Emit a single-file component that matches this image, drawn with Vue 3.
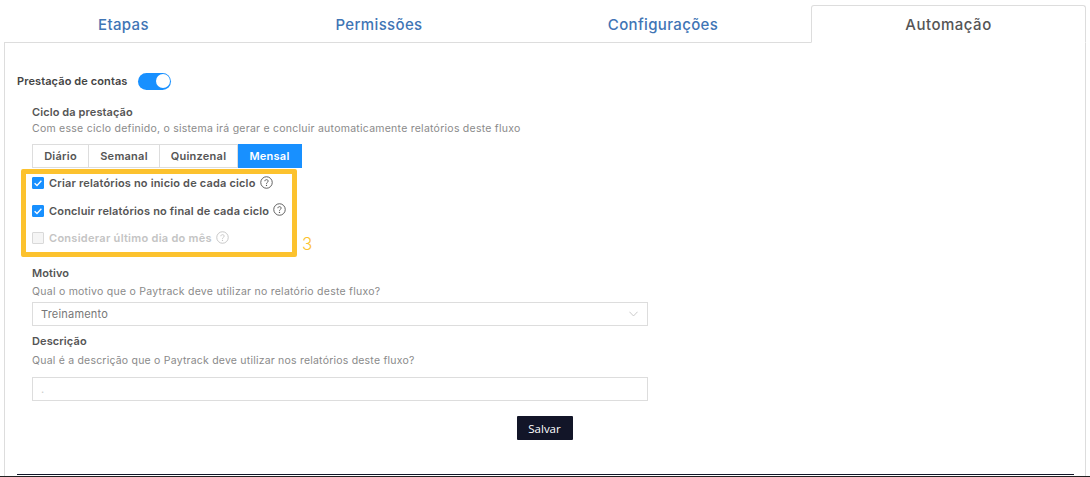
<template>
  <div class="page">
    <div class="tabs">
      <div
        v-for="tab in tabs"
        :key="tab.label"
        class="tab"
        :class="{ active: tab.active }"
        :style="{ width: tab.width + 'px' }"
      >{{ tab.label }}</div>
    </div>

    <div class="panel">
      <div class="head-row">
        <span class="head-label">Prestação de contas</span>
        <span class="switch"><span class="knob"></span></span>
      </div>

      <div class="form">
        <div class="title">Ciclo da prestação</div>
        <div class="hint">Com esse ciclo definido, o sistema irá gerar e concluir automaticamente relatórios deste fluxo</div>

        <div class="segments">
          <span
            v-for="s in cycles"
            :key="s.label"
            class="segment"
            :class="{ on: s.label === selected }"
            :style="{ width: s.width + 'px' }"
          >{{ s.label }}</span>
        </div>

        <div class="checks">
          <div v-for="c in checks" :key="c.label" class="check" :class="{ disabled: c.disabled }">
            <span class="box" :class="{ checked: c.checked }">
              <svg v-if="c.checked" viewBox="0 0 12 12" width="12" height="12">
                <path d="M2.6 6.2 L5 8.5 L9.4 3.8" fill="none" stroke="#fff" stroke-width="1.3" />
              </svg>
            </span>
            <span class="check-label">{{ c.label }}</span>
            <svg class="help" viewBox="0 0 14 14" width="13" height="13">
              <circle cx="7" cy="7" r="6.2" fill="none" stroke="currentColor" stroke-width="1" />
              <path d="M5.2 5.6 C5.2 3.4 8.8 3.4 8.8 5.5 C8.8 6.9 7 6.8 7 8.4" fill="none" stroke="currentColor" stroke-width="1" />
              <circle cx="7" cy="10.2" r="0.7" fill="currentColor" />
            </svg>
          </div>
          <span class="mark">3</span>
        </div>

        <div class="title motivo">Motivo</div>
        <div class="hint sub">Qual o motivo que o Paytrack deve utilizar no relatório deste fluxo?</div>
        <div class="field select">
          <span>Treinamento</span>
          <svg viewBox="0 0 10 6" width="9" height="6">
            <path d="M0.5 0.5 L5 5.2 L9.5 0.5" fill="none" stroke="#c4c4c4" stroke-width="1" />
          </svg>
        </div>

        <div class="title descricao">Descrição</div>
        <div class="hint sub2">Qual é a descrição que o Paytrack deve utilizar nos relatórios deste fluxo?</div>
        <div class="field text"><span class="dot">.</span></div>
      </div>

      <div class="actions">
        <button class="save">Salvar</button>
      </div>

      <div class="rule"></div>
    </div>
    <div class="bottom"></div>
  </div>
</template>

<script setup>
const tabs = [
  { label: 'Etapas', width: 239 },
  { label: 'Permissões', width: 272 },
  { label: 'Configurações', width: 296 },
  { label: 'Automação', width: 275, active: true },
]

const cycles = [
  { label: 'Diário', width: 57 },
  { label: 'Semanal', width: 71 },
  { label: 'Quinzenal', width: 78 },
  { label: 'Mensal', width: 64 },
]
const selected = 'Mensal'

const checks = [
  { label: 'Criar relatórios no inicio de cada ciclo', checked: true },
  { label: 'Concluir relatórios no final de cada ciclo', checked: true },
  { label: 'Considerar último dia do mês', disabled: true },
]
</script>

<style>
html, body {
  margin: 0;
  background: #fff;
  overflow: hidden;
}
</style>

<style scoped>
.page {
  width: 1090px;
  height: 477px;
  padding: 5px 0 0 4px;
  box-sizing: border-box;
  font-family: Inter, "Open Sans", sans-serif;
  color: #555;
  position: relative;
  overflow: hidden;
}

.tabs {
  display: flex;
  height: 38px;
  position: relative;
  z-index: 1;
}

.tab {
  box-sizing: border-box;
  padding-top: 10px;
  text-align: center;
  font-size: 15px;
  font-weight: 500;
  letter-spacing: 0.35px;
  color: #3f75b5;
  border-bottom: 1px solid #ddd;
}

.tab.active {
  padding-top: 9px;
  letter-spacing: 0.5px;
  color: #555;
  border: 1px solid #ddd;
  border-bottom: 1px solid #fff;
  border-radius: 3px 3px 0 0;
}

.panel {
  width: 1082px;
  height: 434px;
  box-sizing: border-box;
  border-left: 1px solid #ddd;
  border-right: 1px solid #ddd;
  padding: 29px 11px 0 12px;
}

.head-row {
  display: flex;
  align-items: center;
  gap: 10px;
  height: 18px;
}

.head-label {
  font-size: 11px;
  font-weight: 600;
  letter-spacing: 0.1px;
  color: #444;
}

.switch {
  display: flex;
  justify-content: flex-end;
  align-items: center;
  width: 33px;
  height: 17px;
  box-sizing: border-box;
  padding-right: 1px;
  border-radius: 9px;
  background: #1890ff;
}

.knob {
  width: 14px;
  height: 14px;
  border-radius: 50%;
  background: #fff;
}

.form {
  padding: 15px 0 0 15px;
  width: 616px;
}

.title {
  font-size: 11px;
  font-weight: 600;
  line-height: 14px;
  letter-spacing: 0.1px;
  color: #555;
}

.hint {
  font-size: 10.5px;
  line-height: 14px;
  margin-top: 3px;
  letter-spacing: 0.25px;
  color: #8a8a8a;
  white-space: nowrap;
}

.hint.sub {
  margin-top: 5px;
}

.hint.sub2 {
  margin-top: 6px;
  letter-spacing: 0.21px;
}

.segments {
  display: flex;
  margin-top: 8px;
  height: 24px;
}

.segment {
  box-sizing: border-box;
  display: flex;
  align-items: center;
  justify-content: center;
  font-size: 11px;
  font-weight: 600;
  letter-spacing: 0.25px;
  color: #555;
  border: 1px solid #ddd;
  border-left: 0;
}

.segment:first-child {
  border-left: 1px solid #ddd;
}

.segment.on {
  background: #1890ff;
  border-color: #1890ff;
  color: #fff;
}

.checks {
  position: relative;
  box-sizing: border-box;
  display: flex;
  flex-direction: column;
  gap: 9.5px;
  width: 276px;
  height: 88px;
  margin: 1px 0 0 -11px;
  padding: 0 0 0 6px;
  border: 5px solid #fcc22e;
  border-radius: 2px;
}

.check {
  display: flex;
  align-items: center;
  height: 18px;
  font-size: 11px;
  font-weight: 600;
  letter-spacing: 0.17px;
  white-space: nowrap;
  color: #555;
}

.check.disabled {
  letter-spacing: 0.28px;
  color: #c4c4c4;
}

.box {
  box-sizing: border-box;
  width: 12px;
  height: 12px;
  margin-right: 5px;
  border-radius: 1px;
  background: #f5f5f5;
  border: 1px solid #d9d9d9;
  display: flex;
  overflow: hidden;
}

.box svg {
  margin: -1px;
  flex: none;
}

.box.checked {
  background: #1890ff;
  border-color: #1890ff;
}

.help {
  margin: -2px 0 0 4px;
  color: #555;
}

.disabled .help {
  color: #c4c4c4;
}

.mark {
  position: absolute;
  left: 276px;
  top: 60px;
  font-size: 17px;
  font-weight: 300;
  color: #fcc22e;
}

.motivo {
  margin-top: 9px;
}

.field {
  box-sizing: border-box;
  height: 24px;
  border: 1px solid #ddd;
  display: flex;
  align-items: center;
  justify-content: space-between;
  padding: 0 9px 0 8px;
  font-size: 11px;
  letter-spacing: 0.2px;
  color: #777;
}

.select {
  margin-top: 3px;
}

.descricao {
  margin-top: 8px;
}

.text {
  margin-top: 9px;
}

.dot {
  color: #ccc;
}

.actions {
  display: flex;
  justify-content: center;
  padding: 15px 2px 0 0;
}

.save {
  width: 56px;
  height: 24px;
  padding: 0;
  border: 0;
  border-radius: 1px;
  background: #121528;
  color: #fff;
  font-family: "Open Sans", sans-serif;
  font-size: 11.5px;
}

.rule {
  position: absolute;
  left: 17px;
  top: 474px;
  width: 1057px;
  height: 1px;
  background: #121528;
}

.bottom {
  position: absolute;
  left: 0;
  right: 0;
  top: 476px;
  height: 1px;
  background: #222;
}
</style>
